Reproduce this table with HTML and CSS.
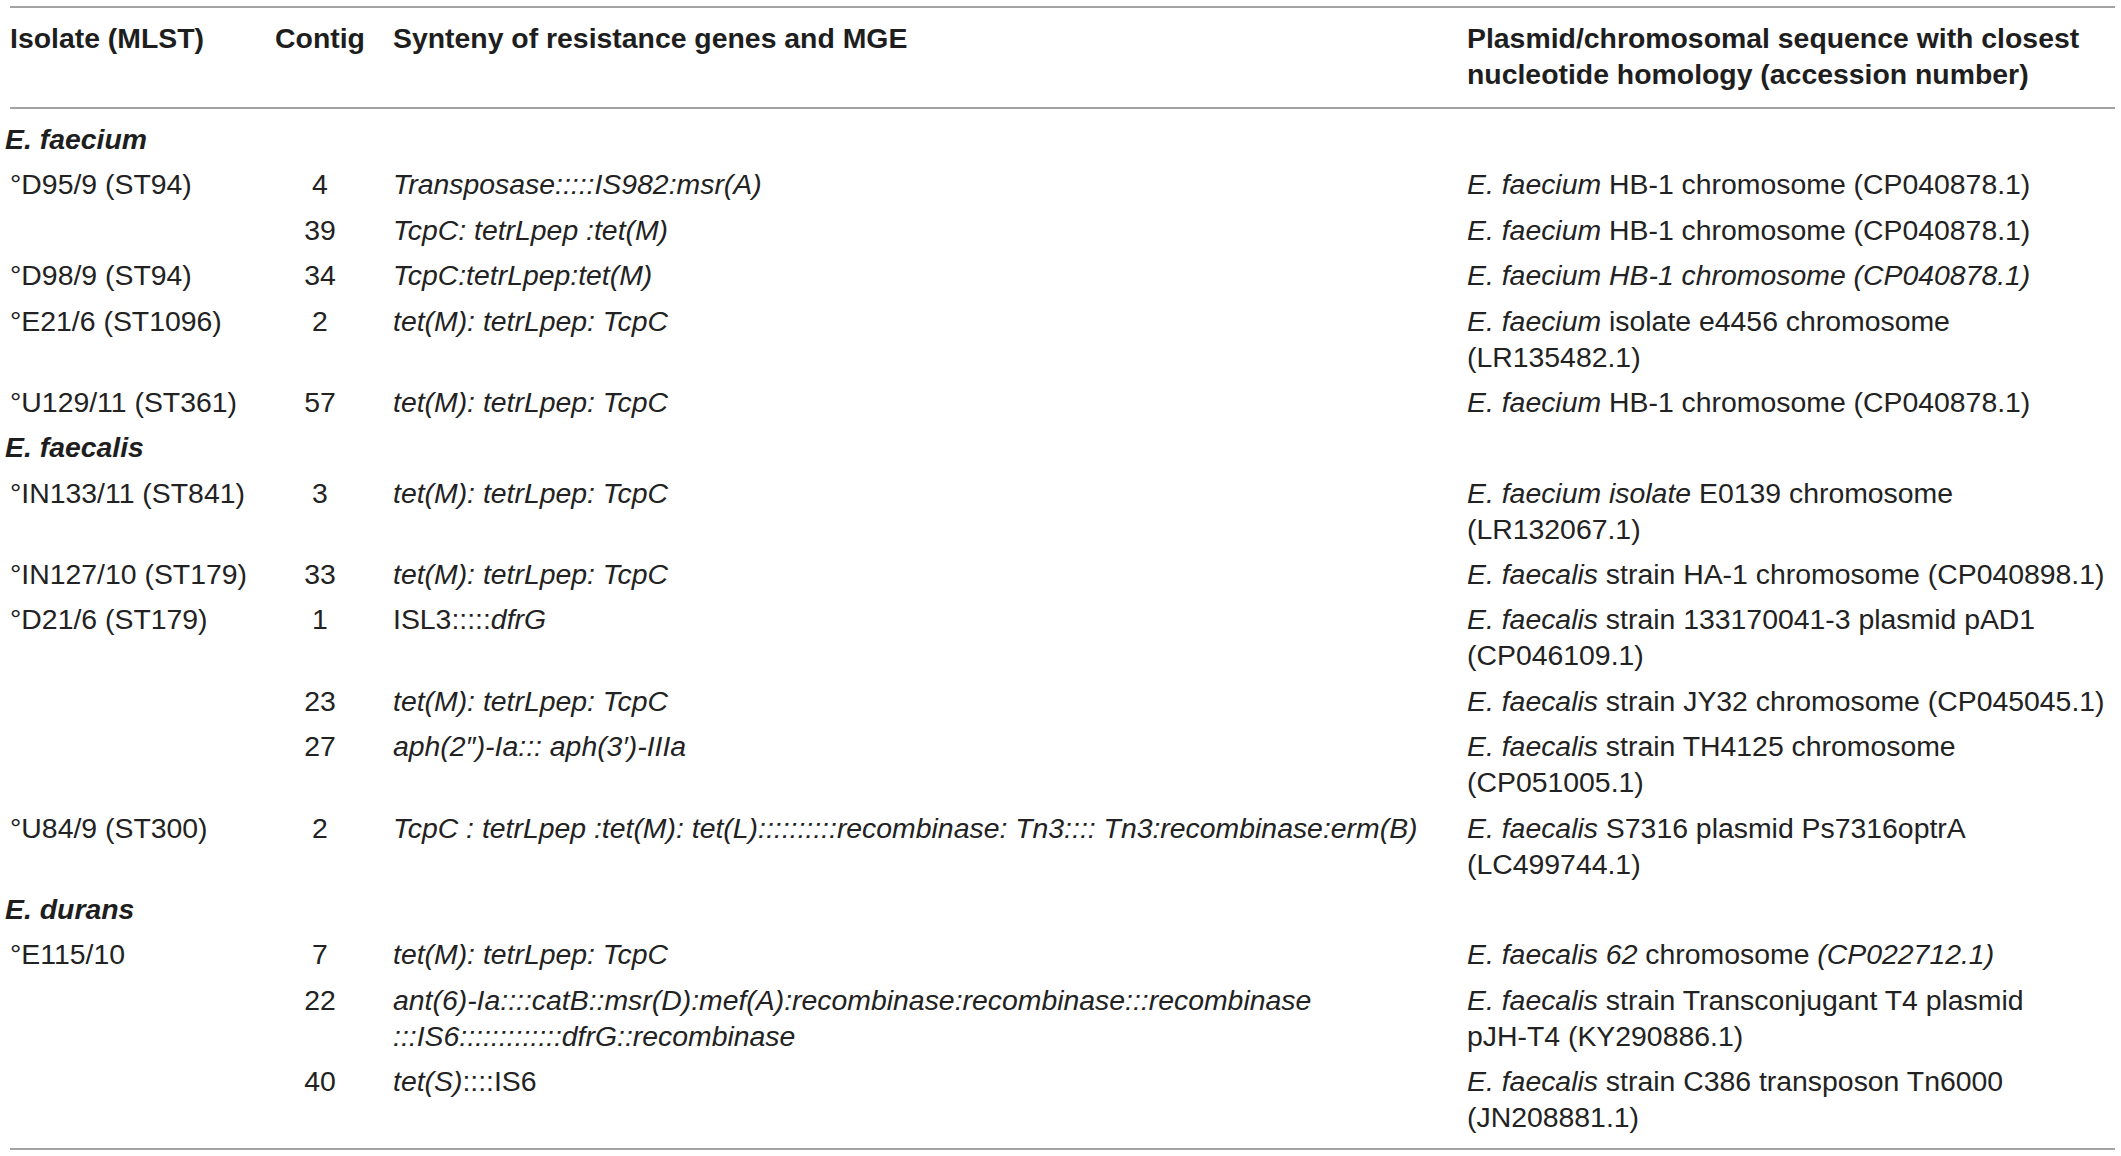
FILE: index.html
```html
<!DOCTYPE html>
<html lang="en">
<head>
<meta charset="utf-8">
<title>Synteny of resistance genes</title>
<link rel="stylesheet" href="styles.css">
</head>
<body>
<table class="tbl">
  <colgroup>
    <col class="c1"><col class="c2"><col class="c3"><col class="c4">
  </colgroup>
  <thead>
    <tr>
      <th>Isolate (MLST)</th>
      <th class="ctr">Contig</th>
      <th class="syn-h">Synteny of resistance genes and MGE</th>
      <th>Plasmid/chromosomal sequence with closest<br>nucleotide homology (accession number)</th>
    </tr>
  </thead>
  <tbody>
    <tr class="grp first"><td colspan="4">E. faecium</td></tr>
    <tr>
      <td>°D95/9 (ST94)</td><td class="ctr">4</td>
      <td class="syn">Transposase:::::IS982:msr(A)</td>
      <td><i>E. faecium</i> HB-1 chromosome (CP040878.1)</td>
    </tr>
    <tr>
      <td></td><td class="ctr">39</td>
      <td class="syn">TcpC: tetrLpep :tet(M)</td>
      <td><i>E. faecium</i> HB-1 chromosome (CP040878.1)</td>
    </tr>
    <tr>
      <td>°D98/9 (ST94)</td><td class="ctr">34</td>
      <td class="syn">TcpC:tetrLpep:tet(M)</td>
      <td><i>E. faecium HB-1 chromosome (CP040878.1)</i></td>
    </tr>
    <tr>
      <td>°E21/6 (ST1096)</td><td class="ctr">2</td>
      <td class="syn">tet(M): tetrLpep: TcpC</td>
      <td><i>E. faecium</i> isolate e4456 chromosome<br>(LR135482.1)</td>
    </tr>
    <tr>
      <td>°U129/11 (ST361)</td><td class="ctr">57</td>
      <td class="syn">tet(M): tetrLpep: TcpC</td>
      <td><i>E. faecium</i> HB-1 chromosome (CP040878.1)</td>
    </tr>
    <tr class="grp"><td colspan="4">E. faecalis</td></tr>
    <tr>
      <td>°IN133/11 (ST841)</td><td class="ctr">3</td>
      <td class="syn">tet(M): tetrLpep: TcpC</td>
      <td><i>E. faecium isolate</i> E0139 chromosome<br>(LR132067.1)</td>
    </tr>
    <tr>
      <td>°IN127/10 (ST179)</td><td class="ctr">33</td>
      <td class="syn">tet(M): tetrLpep: TcpC</td>
      <td><i>E. faecalis</i> strain HA-1 chromosome (CP040898.1)</td>
    </tr>
    <tr>
      <td>°D21/6 (ST179)</td><td class="ctr">1</td>
      <td class="syn"><span class="up">ISL3:::::</span>dfrG</td>
      <td><i>E. faecalis</i> strain 133170041-3 plasmid pAD1<br>(CP046109.1)</td>
    </tr>
    <tr>
      <td></td><td class="ctr">23</td>
      <td class="syn">tet(M): tetrLpep: TcpC</td>
      <td><i>E. faecalis</i> strain JY32 chromosome (CP045045.1)</td>
    </tr>
    <tr>
      <td></td><td class="ctr">27</td>
      <td class="syn">aph(2″)-Ia::: aph(3′)-IIIa</td>
      <td><i>E. faecalis</i> strain TH4125 chromosome<br>(CP051005.1)</td>
    </tr>
    <tr>
      <td>°U84/9 (ST300)</td><td class="ctr">2</td>
      <td class="syn">TcpC : tetrLpep :tet(M): tet(L)::::::::::recombinase: Tn3:::: Tn3:recombinase:erm(B)</td>
      <td><i>E. faecalis</i> S7316 plasmid Ps7316optrA<br>(LC499744.1)</td>
    </tr>
    <tr class="grp"><td colspan="4">E. durans</td></tr>
    <tr>
      <td>°E115/10</td><td class="ctr">7</td>
      <td class="syn">tet(M): tetrLpep: TcpC</td>
      <td><i>E. faecalis 62</i> chromosome <i>(CP022712.1)</i></td>
    </tr>
    <tr>
      <td></td><td class="ctr">22</td>
      <td class="syn">ant(6)-Ia::::catB::msr(D):mef(A):recombinase:recombinase:::recombinase<br>:::IS6:::::::::::::dfrG::recombinase</td>
      <td><i>E. faecalis</i> strain Transconjugant T4 plasmid<br>pJH-T4 (KY290886.1)</td>
    </tr>
    <tr class="last">
      <td></td><td class="ctr">40</td>
      <td class="syn">tet(S)<span class="up">::::IS6</span></td>
      <td><i>E. faecalis</i> strain C386 transposon Tn6000<br>(JN208881.1)</td>
    </tr>
  </tbody>
</table>
</body>
</html>
```
FILE: styles.css
```css
html, body {
  margin: 0;
  padding: 0;
  background: #ffffff;
}

body {
  font-family: "Liberation Sans", Arial, Helvetica, sans-serif;
  font-size: 28.4px;
  line-height: 36px;
  color: #222222;
}

.tbl {
  margin: 6px 0 0 10px;
  width: 2105px;
  table-layout: fixed;
  border-collapse: separate;
  border-spacing: 0;
}

.c1 { width: 255px; }
.c2 { width: 110px; }
.c3 { width: 1092px; }
.c4 { width: 648px; }

.tbl th,
.tbl td {
  padding: 4.7px 0;
  text-align: left;
  vertical-align: top;
  white-space: nowrap;
  font-weight: normal;
}

.tbl thead th {
  font-weight: bold;
  padding: 12px 0 15px;
  border-top: 2px solid #a3a3a3;
  border-bottom: 2px solid #a3a3a3;
  color: #1e1e1e;
}

.tbl .ctr {
  text-align: center;
}

.tbl .syn,
.tbl .syn-h {
  padding-left: 18px;
}

.syn {
  font-style: italic;
}

.syn .up {
  font-style: normal;
}

.tbl tr.grp td {
  font-weight: bold;
  font-style: italic;
  text-indent: -5px;
  color: #1e1e1e;
}

.tbl tr.first td {
  padding-top: 12px;
}

.tbl tr.last td {
  padding-bottom: 12.6px;
  border-bottom: 2px solid #a3a3a3;
}
```
